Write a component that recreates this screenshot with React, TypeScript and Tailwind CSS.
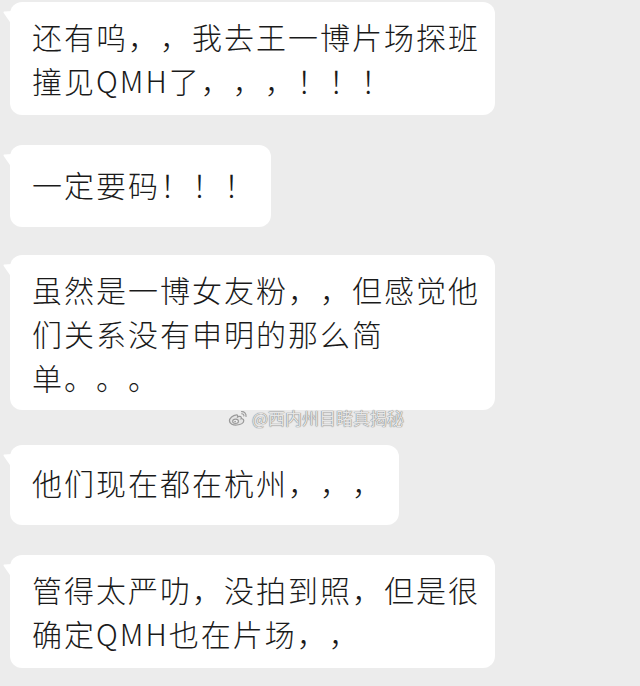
import React from "react";

type BubbleProps = {
  lines: string[];
  className: string;
};

function Tail() {
  return (
    <svg
      className="absolute left-[-7px] top-[8px]"
      width="9"
      height="16"
      viewBox="0 0 9 16"
    >
      <path d="M9 1 L1.2 1.6 Q0 1.8 0.7 2.9 L9 15 Z" fill="#ffffff" />
    </svg>
  );
}

function Bubble({ lines, className }: BubbleProps) {
  return (
    <div
      className={
        "relative bg-white rounded-[12px] pl-[22px] pr-[15px] text-[30px] leading-[44px] tracking-[2px] font-light text-[#1a1a1a] whitespace-nowrap [text-spacing-trim:space-all] " +
        className
      }
      style={{ fontFamily: '"Noto Sans CJK SC", "Noto Sans", sans-serif' }}
    >
      <Tail />
      {lines.map((l, i) => (
        <div key={i}>{l}</div>
      ))}
    </div>
  );
}

function WeiboLogo() {
  return (
    <svg width="20" height="18" viewBox="0 0 18 16" fill="none">
      <path
        d="M7.5 5.2 C4.5 5.6 1.2 8 1.3 10.6 C1.4 13.3 4.6 14.6 8 14.3 C11.6 14 14.3 12.3 14.2 10.2 C14.1 8.8 12.6 8.5 11.8 8.7 C12.4 7.2 11.6 6.2 10 6.6 C9 6.9 8.6 7.2 8.6 7.2 C8.9 5.9 8.6 5 7.5 5.2 Z"
        stroke="#9a9a9a"
        strokeWidth="1.1"
        fill="#e4e4e4"
      />
      <ellipse cx="6.8" cy="11" rx="2.6" ry="2" stroke="#9a9a9a" strokeWidth="1" fill="#f2f2f2" />
      <circle cx="6.4" cy="11.2" r="0.8" fill="#9a9a9a" />
      <path d="M12.2 2.2 C14.6 2 16.6 4 16.2 6.6" stroke="#9a9a9a" strokeWidth="1.1" strokeLinecap="round" />
      <path d="M12.3 4.2 C13.6 4.1 14.5 5 14.3 6.2" stroke="#9a9a9a" strokeWidth="1" strokeLinecap="round" />
    </svg>
  );
}

export default function App() {
  return (
    <div className="relative w-[640px] h-[686px] overflow-hidden bg-[#ececec]">
      <div className="flex flex-col items-start pl-[10px] pt-[2px]">
        <Bubble
          className="pt-[12px] pb-[13px]"
          lines={["还有呜，，我去王一博片场探班", "撞见QMH了，，，！！！"]}
        />
        <Bubble className="mt-[30px] pt-[17px] pb-[21px]" lines={["一定要码！！！"]} />
        <Bubble
          className="mt-[28px] pt-[12px] pb-[11px]"
          lines={["虽然是一博女友粉，，但感觉他", "们关系没有申明的那么简", "单。。。"]}
        />
        <Bubble className="mt-[35px] pt-[15px] pb-[21px]" lines={["他们现在都在杭州，，，"]} />
        <Bubble
          className="mt-[30px] pt-[12px] pb-[13px]"
          lines={["管得太严叻，没拍到照，但是很", "确定QMH也在片场，，"]}
        />
      </div>

      <div className="absolute left-[228px] top-[408px] flex items-center gap-[4px]">
        <WeiboLogo />
        <span
          className="text-[17px] leading-[20px] text-[#e6e6e6] tracking-[0px] [text-shadow:0_0_1px_#7a7a7a,0_0_1px_#7a7a7a]"
          style={{ fontFamily: '"Noto Sans CJK SC", "Noto Sans", sans-serif' }}
        >
          @西内州目睹真揭秘
        </span>
      </div>
    </div>
  );
}
